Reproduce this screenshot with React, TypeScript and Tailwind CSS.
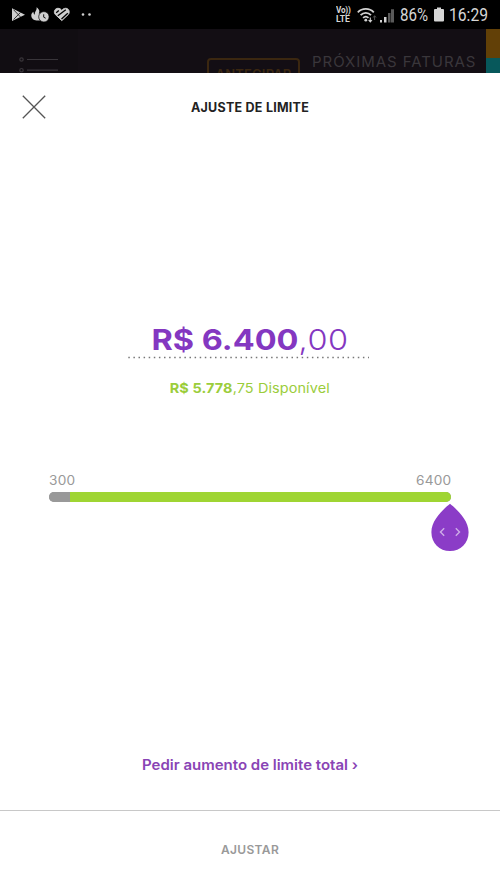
import { useState } from "react";

const MIN_LIMIT = 300;
const MAX_LIMIT = 6400;

function NotificationIcons() {
  return (
    <svg className="h-[29px] w-[100px]" viewBox="0 0 100 29" fill="none">
      {/* Play store */}
      <path d="M12 8.200 25 14.700 12 21Z" fill="#cfcfcf" />
      <path d="M13.500 9.700 20.500 17M13.500 19.500 20.500 12.400" stroke="#222" strokeWidth="0.900" />
      {/* Flame with clock */}
      <path
        d="M36.500 7.200c3.200 2.200 3.400 4.400 2.200 6.600l4-1.300c-3 2.200-4 4.500-2 7.700-4.500 1.200-9-.5-9.400-4.200-.2-2 .8-3.400 2.100-4.200 0 1.600.6 2.500 1.600 2.900-1-3 2.400-4.300 1.500-7.500Z"
        fill="#cfcfcf"
      />
      <circle cx="43.900" cy="16.800" r="5.200" fill="#cfcfcf" stroke="#000" strokeWidth="0.700" />
      <path d="M43.700 14.300v2.900l2 1" stroke="#111" strokeWidth="1" />
      {/* Striped heart */}
      <path
        d="M61.800 20.600 55.300 14.500c-2-2.300-.6-6.200 2.600-6.200 1.700 0 2.900.8 3.900 2 1-1.200 2.200-2 3.900-2 3.200 0 4.600 3.900 2.600 6.200Z"
        fill="#cfcfcf"
        stroke="#cfcfcf"
        strokeWidth="1"
      />
      <path d="M57.800 15.700 65.800 9.700M61.500 18.900 67.800 13.200M56.200 12.700 58.800 10.500" stroke="#000" strokeWidth="1.300" />
      <circle cx="83" cy="14.500" r="1.300" fill="#cfcfcf" />
      <circle cx="89.500" cy="14.500" r="1.300" fill="#cfcfcf" />
    </svg>
  );
}

function SignalIcons() {
  return (
    <svg className="h-[29px] w-[40px]" viewBox="0 0 40 29" fill="none">
      {/* Wifi */}
      <g stroke="#d2d2d2" strokeWidth="1.800">
        <path d="M.8 11.400c4.300-4.600 11.700-4.600 16 0" />
        <path d="M3.600 14.200c3-3.100 7.400-3.100 10.400 0" />
        <path d="M6.100 16.900c1.700-1.600 3.700-1.600 5.400 0" />
      </g>
      <circle cx="8.800" cy="19.200" r="1.400" fill="#d2d2d2" />
      <path d="M13.300 16.500v4.300M11.600 19l1.700 1.900 1.700-1.900" stroke="#d2d2d2" strokeWidth="1.100" />
      <path d="M17.600 19v-4M16.200 16.500l1.400-1.800 1.400 1.800" stroke="#555" strokeWidth="1" />
      {/* Mobile signal */}
      <path d="M23 21.500v-2.500h2v2.500ZM27 21.500v-5.500h2.500v5.500Z" fill="#d2d2d2" />
      <path d="M31 21.500v-9.500h2.500v9.500ZM34 21.500V8.300h3v13.200Z" fill="#5a5a5a" />
    </svg>
  );
}

function StatusBar() {
  return (
    <div className="flex h-[29px] shrink-0 items-center justify-between bg-black text-[#d6d6d6]">
      <NotificationIcons />
      <div className="flex h-full w-[164px] items-center pt-px">
        <div className="w-[21px] text-[9px] font-bold leading-[9px] font-['Roboto',sans-serif]">
          <div className="origin-left scale-x-[0.9] whitespace-nowrap tracking-tight">Vo))</div>
          <div className="origin-left scale-x-[0.96]">LTE</div>
        </div>
        <SignalIcons />
        <span className="ml-[3px] w-[34px] origin-left scale-x-[0.84] whitespace-nowrap text-[18px] leading-none font-['Roboto',sans-serif]">
          86%
        </span>
        <svg className="h-[29px] w-[10px]" viewBox="0 0 10 29" fill="#d6d6d6">
          <path d="M3 6.500h4v2H3ZM1 8h8q1 0 1 1v10.500q0 1-1 1H1q-1 0-1-1V9q0-1 1-1Z" />
        </svg>
        <span className="ml-[5px] w-[50px] origin-left scale-x-[0.87] whitespace-nowrap text-[18px] leading-none font-['Roboto',sans-serif]">
          16:29
        </span>
      </div>
    </div>
  );
}

// The invoice screen that stays dimmed behind the sheet
function DimmedHeader() {
  return (
    <div className="flex h-[44px] shrink-0 items-start overflow-hidden bg-[#130e14]">
      <div className="h-full w-[78px] bg-[#110d12]">
        <svg className="h-[44px] w-[78px]" viewBox="0 0 78 44" fill="none" stroke="#39353a">
          <circle cx="21.500" cy="30.500" r="1.700" strokeWidth="1.200" />
          <circle cx="21.500" cy="41.200" r="1.700" strokeWidth="1.200" />
          <path d="M27 30.500h31M27 41.200h31" strokeWidth="1.200" />
        </svg>
      </div>
      <div className="mt-[29px] ml-[129px] h-[30px] w-[93px] rounded-[4px] border-2 border-[#3b2710] pt-[6px] text-center text-[13px] font-semibold leading-[17px] tracking-[0.2px] text-[#3b2710]">
        ANTECIPAR
      </div>
      <div className="mt-[23px] ml-[12px] w-[174px] whitespace-nowrap text-[15px] leading-[20px] tracking-[0.950px] text-[#3a363b]">
        PRÓXIMAS FATURAS
      </div>
      <div className="h-full w-[14px]">
        <div className="h-[29px] bg-[#624007]" />
        <div className="h-[15px] bg-[#07585b]" />
      </div>
    </div>
  );
}

function LimitSlider({ value, onChange }: { value: number; onChange: (value: number) => void }) {
  const percent = ((value - MIN_LIMIT) / (MAX_LIMIT - MIN_LIMIT)) * 100;

  return (
    <div className="mx-[49px]">
      <div className="flex justify-between text-[12.500px] leading-[16px] tracking-[0.2px] text-[#999]">
        <span className="origin-left scale-x-[1.090]">{MIN_LIMIT}</span>
        <span className="origin-right scale-x-[1.090]">{MAX_LIMIT}</span>
      </div>
      <div className="relative mt-[3px] h-[10px] rounded-full bg-[#999]">
        <div className="flex h-full overflow-hidden rounded-full" style={{ width: `${percent}%` }}>
          <div className="w-[21px] bg-[#999]" />
          <div className="flex-1 bg-[#9fd533]" />
        </div>
        <svg
          className="absolute top-[11px] h-[49px] w-[38px] -translate-x-[20px]"
          style={{ left: `${percent}%` }}
          viewBox="0 0 38 49"
          fill="none"
        >
          <path
            d="M19 .8C24 5 37.600 16 37.600 29.200 37.600 40 29.500 48 19 48S.4 40 .4 29.200C.4 16 14 5 19 .8Z"
            fill="#8b3cc7"
          />
          <path d="m13.200 25.300-3.700 3.700 3.700 3.700M24.800 25.300l3.700 3.700-3.700 3.700" stroke="#ceade7" strokeWidth="1.400" />
        </svg>
        <input
          type="range"
          aria-label="Limite"
          className="absolute inset-0 w-full cursor-pointer opacity-0"
          min={MIN_LIMIT}
          max={MAX_LIMIT}
          value={value}
          onChange={(e) => onChange(Number(e.target.value))}
        />
      </div>
    </div>
  );
}

export default function App() {
  const [limit, setLimit] = useState(MAX_LIMIT);

  return (
    <main className="flex h-[889px] w-[500px] flex-col overflow-hidden bg-white font-['Inter',sans-serif]">
      <StatusBar />
      <DimmedHeader />

      <header className="grid h-[68px] shrink-0 grid-cols-[68px_1fr_68px] items-center">
        <button aria-label="Fechar" className="flex justify-center">
          <svg className="size-[24px]" viewBox="0 0 24 24" stroke="#555" strokeWidth="1.300">
            <path d="m.8.800 22.400 22.400M23.200.800.800 23.200" />
          </svg>
        </button>
        <h1 className="pt-[2px] text-center text-[12.500px] font-bold leading-[20px] tracking-[0.250px] text-[#222]">
          AJUSTE DE LIMITE
        </h1>
      </header>

      {/* Selected limit */}
      <section className="mt-[181px] flex flex-col items-center">
        <div className="flex h-[36px] scale-x-[1.120] justify-center whitespace-nowrap text-[29px] leading-[36px] text-[#8437c1]">
          <span className="font-bold">R$ {limit.toLocaleString("pt-BR")}</span>
          <span className="font-light tracking-[0.5px]">,00</span>
        </div>
        <svg className="-mt-[2px] mr-[4px] h-[3px] w-[241px]" viewBox="0 0 241 3">
          <path d="M.3 1.500H241" stroke="#777" strokeWidth="1.500" strokeDasharray="1.500 3.600" />
        </svg>
        <p className="mt-[19px] scale-x-[1.070] text-[13.500px] leading-[20px] tracking-[0.1px] text-[#9bcd3b]">
          <span className="font-bold">R$ 5.778</span>,75 Disponível
        </p>
      </section>

      <div className="mt-[75px]">
        <LimitSlider value={limit} onChange={setLimit} />
      </div>

      <button className="mt-auto mb-[35px] scale-x-[1.070] text-center text-[14px] font-semibold leading-[20px] text-[#8944b5]">
        Pedir aumento de limite total ›
      </button>

      <footer className="flex h-[79px] shrink-0 items-center justify-center border-t border-[#c8c8c8]">
        <button className="text-[12px] font-semibold leading-[18px] tracking-[0.350px] text-[#999]">AJUSTAR</button>
      </footer>
    </main>
  );
}
